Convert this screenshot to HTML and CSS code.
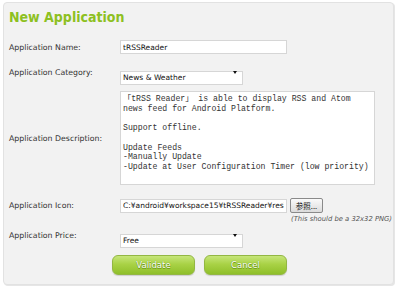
FILE: index.html
```html
<!DOCTYPE html>
<html>
<head>
<meta charset="utf-8">
<link rel="stylesheet" href="styles.css">
</head>
<body>
<div class="panel">
  <h1 class="title">New Application</h1>
  <div class="row row-name">
    <label class="label">Application Name:</label>
    <input class="field" type="text" value="tRSSReader">
  </div>
  <div class="row row-cat">
    <label class="label">Application Category:</label>
    <span class="select-wrap"><select class="select"><option>News &amp; Weather</option></select></span>
  </div>
  <div class="row row-desc">
    <label class="label">Application Description:</label>
    <textarea class="area">「tRSS Reader」 is able to display RSS and Atom
news feed for Android Platform.

Support offline.

Update Feeds
-Manually Update
-Update at User Configuration Timer (low priority)</textarea>
  </div>
  <div class="row row-icon">
    <label class="label">Application Icon:</label>
    <input class="field" type="text" value="C:¥android¥workspace15¥tRSSReader¥res¥drawable">
    <button class="browse" type="button">参照...</button>
  </div>
  <div class="hint">(This should be a 32x32 PNG)</div>
  <div class="row row-price">
    <label class="label">Application Price:</label>
    <span class="select-wrap"><select class="select"><option>Free</option></select></span>
  </div>
  <div class="actions">
    <button class="btn" type="button">Validate</button>
    <button class="btn" type="button">Cancel</button>
  </div>
</div>
</body>
</html>
```
FILE: styles.css
```css
html, body {
  margin: 0;
  padding: 0;
  background: #ffffff;
}
body {
  width: 400px;
  height: 289px;
  overflow: hidden;
  font-family: "DejaVu Sans", Verdana, sans-serif;
}
.panel {
  margin: 2px 0 0 3px;
  width: 391px;
  height: 283px;
  box-sizing: border-box;
  border: 1px solid #e2e2e2;
  border-radius: 4px;
  background: #f2f2f2;
  box-shadow: 1px 1px 0 #e6e6e6;
  padding: 5px 0 0 5px;
}
.title {
  margin: 0;
  font-family: "DejaVu Sans Condensed", "DejaVu Sans", sans-serif;
  font-stretch: condensed;
  font-size: 14px;
  line-height: 18px;
  font-weight: bold;
  color: #8dc021;
}
.row {
  display: flex;
  align-items: center;
}
.label {
  width: 111px;
  flex: none;
  font-size: 7.8px;
  color: #333;
}
.row-name { margin-top: 14px; height: 14px; }
.row-cat { margin-top: 11px; height: 14px; }
.row-desc { margin-top: 12px; height: 94px; }
.row-icon { margin-top: 13px; height: 15px; }
.row-price { margin-top: 4px; height: 14px; }
.field {
  width: 167px;
  height: 14px;
  box-sizing: border-box;
  border: 1px solid #d6d6d6;
  background: #fff;
  padding: 0 2px;
  margin: 0;
  font-family: "DejaVu Sans", sans-serif;
  font-size: 7.5px;
  color: #111;
  outline: none;
}
.select-wrap {
  position: relative;
  display: block;
  width: 123px;
  height: 14px;
}
.select {
  appearance: none;
  -webkit-appearance: none;
  width: 123px;
  height: 14px;
  box-sizing: border-box;
  border: 1px solid #d6d6d6;
  border-radius: 0;
  background: #fff;
  margin: 0;
  padding: 0 2px;
  font-family: "DejaVu Sans", sans-serif;
  font-size: 7.5px;
  line-height: 12px;
  color: #111;
}
.select-wrap::after {
  content: "";
  position: absolute;
  right: 6px;
  top: 6px;
  border-left: 2.5px solid transparent;
  border-right: 2.5px solid transparent;
  border-top: 3px solid #111;
}
.area {
  width: 255px;
  height: 94px;
  box-sizing: border-box;
  border: 1px solid #d6d6d6;
  background: #fff;
  margin: 0;
  padding: 2px 2px;
  resize: none;
  overflow: hidden;
  font-family: "Liberation Mono", "Noto Sans CJK JP", monospace;
  font-size: 8.2px;
  line-height: 9.7px;
  color: #333;
  outline: none;
}
.browse {
  margin-left: 3px;
  width: 33px;
  height: 15px;
  padding: 0;
  border: 1px solid #8a8a8a;
  border-radius: 2px;
  background: linear-gradient(#fafafa, #dcdcdc);
  font-family: "Noto Sans CJK JP", "DejaVu Sans", sans-serif;
  font-size: 7.5px;
  color: #111;
}
.hint {
  text-align: right;
  padding-right: 1px;
  padding-top: 2px;
  font-size: 6.8px;
  line-height: 9px;
  font-style: italic;
  color: #555;
}
.actions {
  display: flex;
  gap: 9px;
  margin-top: 13px;
  padding-left: 103px;
}
.btn {
  width: 83px;
  height: 20px;
  padding: 0;
  border: 1px solid #93b743;
  border-radius: 6px;
  background: linear-gradient(#c6e67a 0%, #a9d246 45%, #8fbf2a 100%);
  color: #fff;
  font-family: "DejaVu Sans", sans-serif;
  font-size: 8.5px;
  text-shadow: 0 0 1px #5f8a10, 0 1px 0 #6f9a1a;
  box-shadow: 0 1px 1px rgba(0,0,0,0.15);
}
```
